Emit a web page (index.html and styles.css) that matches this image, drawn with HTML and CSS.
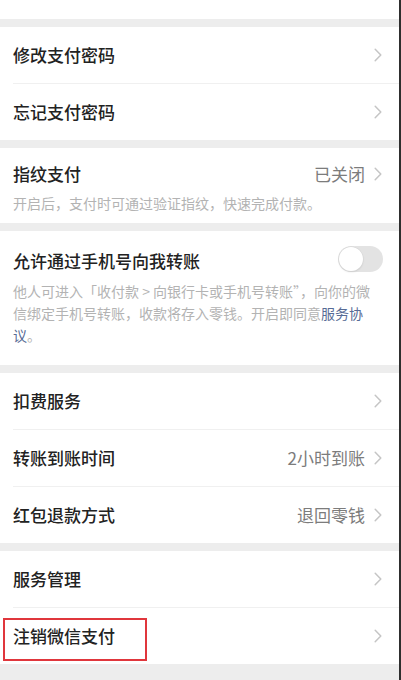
FILE: index.html
```html
<!DOCTYPE html>
<html lang="zh-CN">
<head>
<meta charset="utf-8">
<title>支付设置</title>
<link rel="stylesheet" href="styles.css">
</head>
<body>
<div class="page">
  <div class="top"></div>

  <section class="group">
    <div class="cell">
      <div class="cell-body">
        <span class="label">修改支付密码</span>
        <svg class="arrow" viewBox="0 0 8 14"><path d="M1.2 1.2 L6.8 7 L1.2 12.8"/></svg>
      </div>
    </div>
    <div class="cell">
      <div class="cell-body">
        <span class="label">忘记支付密码</span>
        <svg class="arrow" viewBox="0 0 8 14"><path d="M1.2 1.2 L6.8 7 L1.2 12.8"/></svg>
      </div>
    </div>
  </section>

  <section class="group block finger">
    <div class="block-head">
      <span class="label">指纹支付</span>
      <span class="value">已关闭</span>
      <svg class="arrow" viewBox="0 0 8 14"><path d="M1.2 1.2 L6.8 7 L1.2 12.8"/></svg>
    </div>
    <p class="desc">开启后，支付时可通过验证指纹，快速完成付款。</p>
  </section>

  <section class="group block phone">
    <div class="block-head">
      <span class="label">允许通过手机号向我转账</span>
      <span class="switch"><span class="knob"></span></span>
    </div>
    <p class="desc desc-long">他人可进入「收付款 &gt; 向银行卡或手机号转账”，向你的微<br>信绑定手机号转账，收款将存入零钱。开启即同意<a class="link">服务协<br>议</a>。</p>
  </section>

  <section class="group">
    <div class="cell">
      <div class="cell-body">
        <span class="label">扣费服务</span>
        <svg class="arrow" viewBox="0 0 8 14"><path d="M1.2 1.2 L6.8 7 L1.2 12.8"/></svg>
      </div>
    </div>
    <div class="cell">
      <div class="cell-body">
        <span class="label">转账到账时间</span>
        <span class="value">2小时到账</span>
        <svg class="arrow" viewBox="0 0 8 14"><path d="M1.2 1.2 L6.8 7 L1.2 12.8"/></svg>
      </div>
    </div>
    <div class="cell">
      <div class="cell-body">
        <span class="label">红包退款方式</span>
        <span class="value">退回零钱</span>
        <svg class="arrow" viewBox="0 0 8 14"><path d="M1.2 1.2 L6.8 7 L1.2 12.8"/></svg>
      </div>
    </div>
  </section>

  <section class="group">
    <div class="cell">
      <div class="cell-body">
        <span class="label">服务管理</span>
        <svg class="arrow" viewBox="0 0 8 14"><path d="M1.2 1.2 L6.8 7 L1.2 12.8"/></svg>
      </div>
    </div>
    <div class="cell cell-marked">
      <div class="cell-body">
        <span class="label">注销微信支付</span>
        <svg class="arrow" viewBox="0 0 8 14"><path d="M1.2 1.2 L6.8 7 L1.2 12.8"/></svg>
      </div>
      <span class="mark"></span>
    </div>
  </section>
</div>
</body>
</html>
```
FILE: styles.css
```css
html, body {
  margin: 0;
  padding: 0;
  background: #ededed;
}

body {
  font-family: "Noto Sans CJK SC", "Noto Sans", sans-serif;
  color: #1a1a1a;
}

.page {
  width: 399px;
  min-height: 680px;
  border-right: 2px solid #2e2e2e;
  background: #ededed;
}

.top {
  height: 19px;
  background: #fff;
}

.group {
  margin-top: 8px;
  background: #fff;
}

/* list rows */
.cell {
  position: relative;
  padding-left: 13px;
}

.cell-body {
  display: flex;
  align-items: center;
  height: 56px;
  padding-right: 17px;
  border-top: 1px solid #f0f0f0;
}

.cell:first-child .cell-body {
  border-top: none;
}

.label {
  flex: 1;
  font-size: 17px;
  line-height: 24px;
  font-weight: 500;
  color: #222;
}

.value {
  font-size: 17px;
  line-height: 24px;
  color: #7c7c7c;
  margin-right: 9px;
}

.arrow {
  width: 8px;
  height: 14px;
  flex: none;
}

.arrow path {
  fill: none;
  stroke: #c5c5c5;
  stroke-width: 1.5;
  stroke-linecap: round;
  stroke-linejoin: round;
}

/* rows with a description underneath */
.block {
  padding: 14px 17px 10px 13px;
}

.block-head {
  display: flex;
  align-items: center;
  height: 24px;
}

.desc {
  margin: 7px 0 0;
  font-size: 14px;
  line-height: 20px;
  color: #b3b3b3;
}

.phone {
  padding-top: 18px;
  padding-bottom: 19px;
}

.desc-long {
  line-height: 22px;
  margin-top: 7px;
}

.link {
  color: #576b95;
}

/* off-state switch */
.switch {
  position: relative;
  width: 45px;
  height: 26px;
  margin-top: -4px;
  margin-right: -1px;
  border-radius: 13px;
  background: #e3e3e3;
  flex: none;
}

.knob {
  position: absolute;
  left: 1px;
  top: 1px;
  width: 24px;
  height: 24px;
  border-radius: 50%;
  background: #fff;
  box-shadow: 0 0 0 0.5px #d6d6d6, 0 1px 2px rgba(0, 0, 0, 0.12);
}

/* highlight frame around the closing row */
.mark {
  position: absolute;
  left: 3px;
  top: 11px;
  width: 140px;
  height: 39px;
  border: 2px solid #e0363c;
}
```
